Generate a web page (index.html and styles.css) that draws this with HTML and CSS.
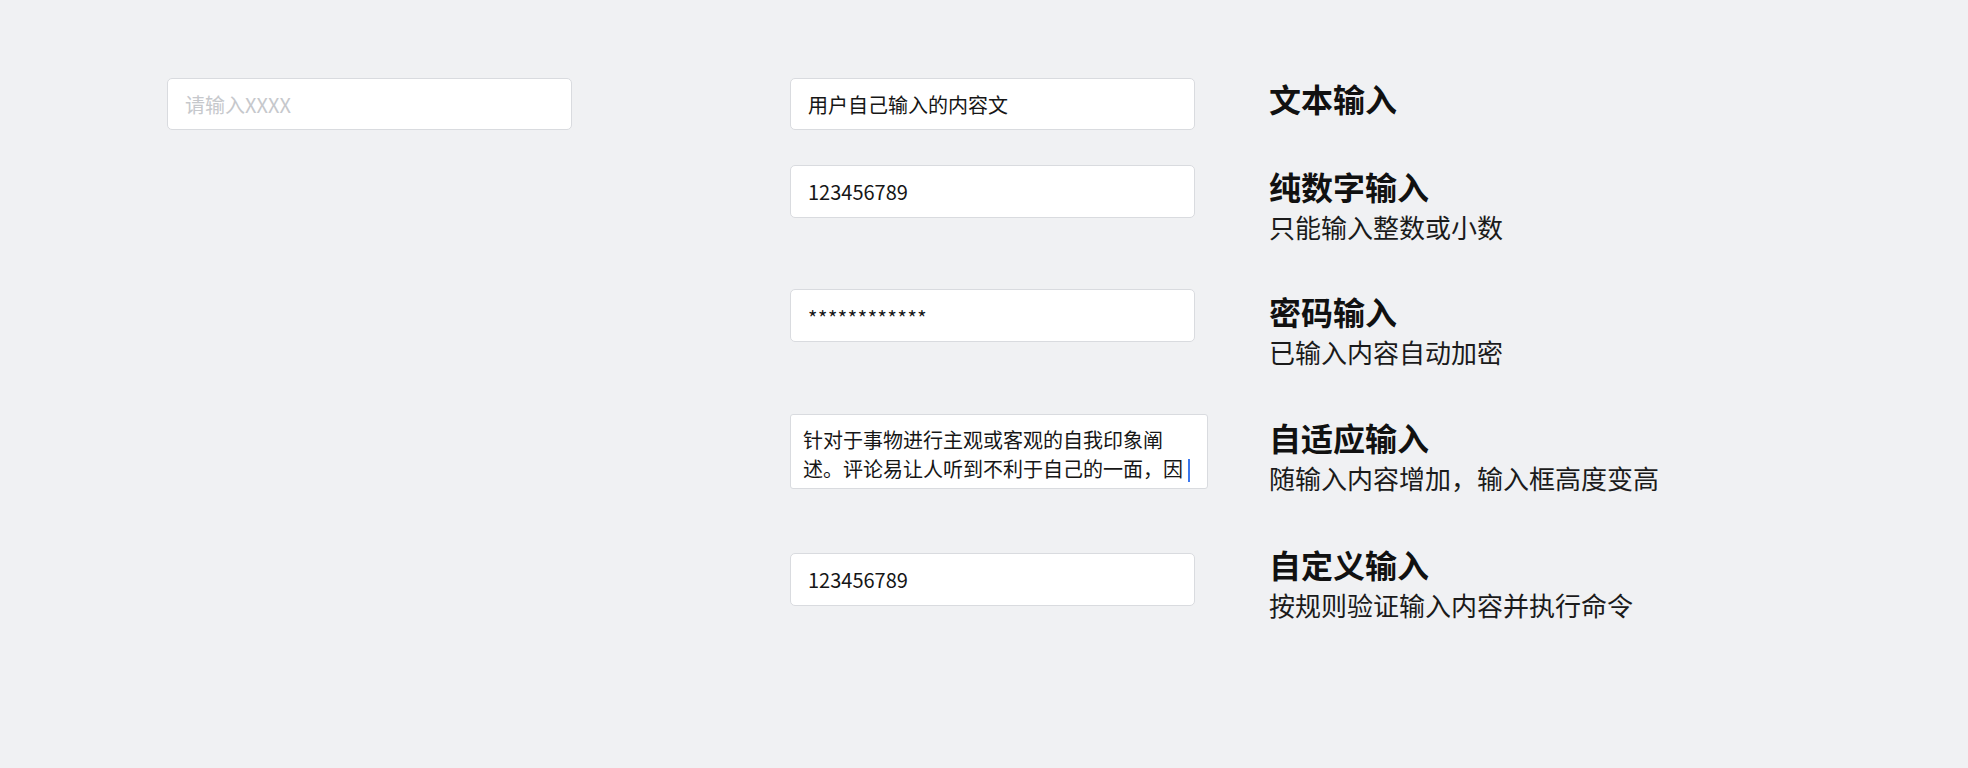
FILE: index.html
```html
<!DOCTYPE html>
<html lang="zh-CN">
<head>
<meta charset="utf-8">
<title>输入框</title>
<link rel="stylesheet" href="styles.css">
</head>
<body>
<main class="page">
  <section class="row row-text">
    <div class="col-a"><input class="field" type="text" placeholder="请输入XXXX"></div>
    <div class="col-b"><input class="field" type="text" value="用户自己输入的内容文"></div>
    <div class="label"><h2 class="title">文本输入</h2></div>
  </section>
  <section class="row row-number">
    <div class="col-a"></div>
    <div class="col-b"><input class="field" type="text" value="123456789"></div>
    <div class="label"><h2 class="title">纯数字输入</h2><p class="desc">只能输入整数或小数</p></div>
  </section>
  <section class="row row-password">
    <div class="col-a"></div>
    <div class="col-b"><input class="field field-secret" type="text" value="************"></div>
    <div class="label"><h2 class="title">密码输入</h2><p class="desc">已输入内容自动加密</p></div>
  </section>
  <section class="row row-auto">
    <div class="col-a"></div>
    <div class="col-b"><div class="textarea">针对于事物进行主观或客观的自我印象阐<br>述。评论易让人听到不利于自己的一面，因<span class="caret"></span></div></div>
    <div class="label"><h2 class="title">自适应输入</h2><p class="desc">随输入内容增加，输入框高度变高</p></div>
  </section>
  <section class="row row-custom">
    <div class="col-a"></div>
    <div class="col-b"><input class="field" type="text" value="123456789"></div>
    <div class="label"><h2 class="title">自定义输入</h2><p class="desc">按规则验证输入内容并执行命令</p></div>
  </section>
</main>
</body>
</html>
```

FILE: styles.css
```css
html, body {
  margin: 0;
  padding: 0;
  background: #f0f1f3;
}

body {
  font-family: "Noto Sans CJK SC", "Noto Sans", sans-serif;
  color: #151515;
}

.page {
  padding: 78px 0 0 167px;
}

.row {
  display: grid;
  grid-template-columns: 405px 419px auto;
  column-gap: 218px;
  align-items: start;
}

.row > .label {
  margin-left: -158px;
}

.row-number { margin-top: 35px; }
.row-password { margin-top: 41px; }
.row-auto { margin-top: 41px; }
.row-custom { margin-top: 45px; }

.row-number .label { margin-top: 1px; }
.row-password .label { margin-top: 2px; }
.row-auto .label { margin-top: 3px; }
.row-custom .col-b { margin-top: 9px; }

.field {
  display: block;
  box-sizing: border-box;
  width: 405px;
  height: 53px;
  margin: 0;
  padding: 0 17px;
  border: 1px solid #d9dbdf;
  border-radius: 5px;
  background: #ffffff;
  font-family: "Noto Sans CJK SC", "Noto Sans", sans-serif;
  font-size: 20px;
  color: #161616;
  outline: none;
}

.row-text .field { height: 52px; }

.field-secret {
  letter-spacing: 0.6px;
  padding-top: 4px;
}

.field::placeholder {
  color: #c6c8cc;
}

.textarea {
  box-sizing: border-box;
  width: 418px;
  height: 75px;
  padding: 10px 12px 5px;
  border: 1px solid #d9dbdf;
  border-radius: 3px;
  background: #ffffff;
  font-size: 20px;
  line-height: 29px;
  color: #161616;
  white-space: nowrap;
}

.caret {
  display: inline-block;
  width: 2px;
  height: 23px;
  margin-left: 5px;
  background: #3b78f0;
  vertical-align: -5px;
}

.title {
  margin: 0;
  font-size: 32px;
  line-height: 40px;
  font-weight: 700;
  color: #111111;
}

.desc {
  margin: 0;
  font-size: 26px;
  line-height: 42px;
  font-weight: 400;
  color: #1b1b1b;
}
```
